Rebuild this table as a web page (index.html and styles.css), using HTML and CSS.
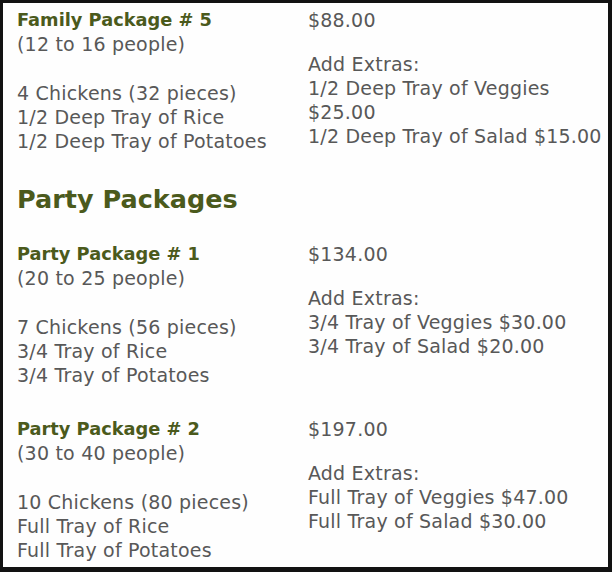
FILE: index.html
```html
<!DOCTYPE html>
<html>
<head>
<meta charset="utf-8">
<link rel="stylesheet" href="styles.css">
</head>
<body>
<div class="frame">
  <section class="pkg">
    <div class="col left">
      <h3 class="title">Family Package # 5</h3>
      <p>(12 to 16 people)</p>
      <p class="items">4 Chickens (32 pieces)<br>1/2 Deep Tray of Rice<br>1/2 Deep Tray of Potatoes</p>
    </div>
    <div class="col right">
      <p>$88.00</p>
      <p class="extras">Add Extras:<br>1/2 Deep Tray of Veggies<br>$25.00<br>1/2 Deep Tray of Salad $15.00</p>
    </div>
  </section>

  <h2 class="section">Party Packages</h2>

  <section class="pkg">
    <div class="col left">
      <h3 class="title">Party Package # 1</h3>
      <p>(20 to 25 people)</p>
      <p class="items">7 Chickens (56 pieces)<br>3/4 Tray of Rice<br>3/4 Tray of Potatoes</p>
    </div>
    <div class="col right">
      <p>$134.00</p>
      <p class="extras">Add Extras:<br>3/4 Tray of Veggies $30.00<br>3/4 Tray of Salad $20.00</p>
    </div>
  </section>

  <section class="pkg last">
    <div class="col left">
      <h3 class="title">Party Package # 2</h3>
      <p>(30 to 40 people)</p>
      <p class="items">10 Chickens (80 pieces)<br>Full Tray of Rice<br>Full Tray of Potatoes</p>
    </div>
    <div class="col right">
      <p>$197.00</p>
      <p class="extras">Add Extras:<br>Full Tray of Veggies $47.00<br>Full Tray of Salad $30.00</p>
    </div>
  </section>
</div>
</body>
</html>
```

FILE: styles.css
```css
html, body {
  margin: 0;
  padding: 0;
  background: #121212;
}

body {
  padding: 3px 4px 5px 3px;
  width: 605px;
  height: 564px;
}

.frame {
  background: #fefefe;
  height: 564px;
  box-sizing: border-box;
  padding: 5px 0 0 14px;
  font-family: "DejaVu Sans", Verdana, sans-serif;
  font-size: 19px;
  line-height: 24px;
  letter-spacing: 0.2px;
  color: #585858;
  overflow: hidden;
}

p, h2, h3 {
  margin: 0;
}

.pkg {
  display: grid;
  grid-template-columns: 291px 1fr;
  margin-bottom: 30px;
}

.title {
  font-size: 17.8px;
  font-weight: bold;
  letter-spacing: 0;
  color: #4b5a1c;
}

.items {
  margin-top: 25px;
}

.extras {
  margin-top: 20px;
}

.section {
  font-size: 25.5px;
  font-weight: bold;
  letter-spacing: 0;
  color: #4b5a1c;
  line-height: 32px;
  margin: 1px 0 27px;
}
```
